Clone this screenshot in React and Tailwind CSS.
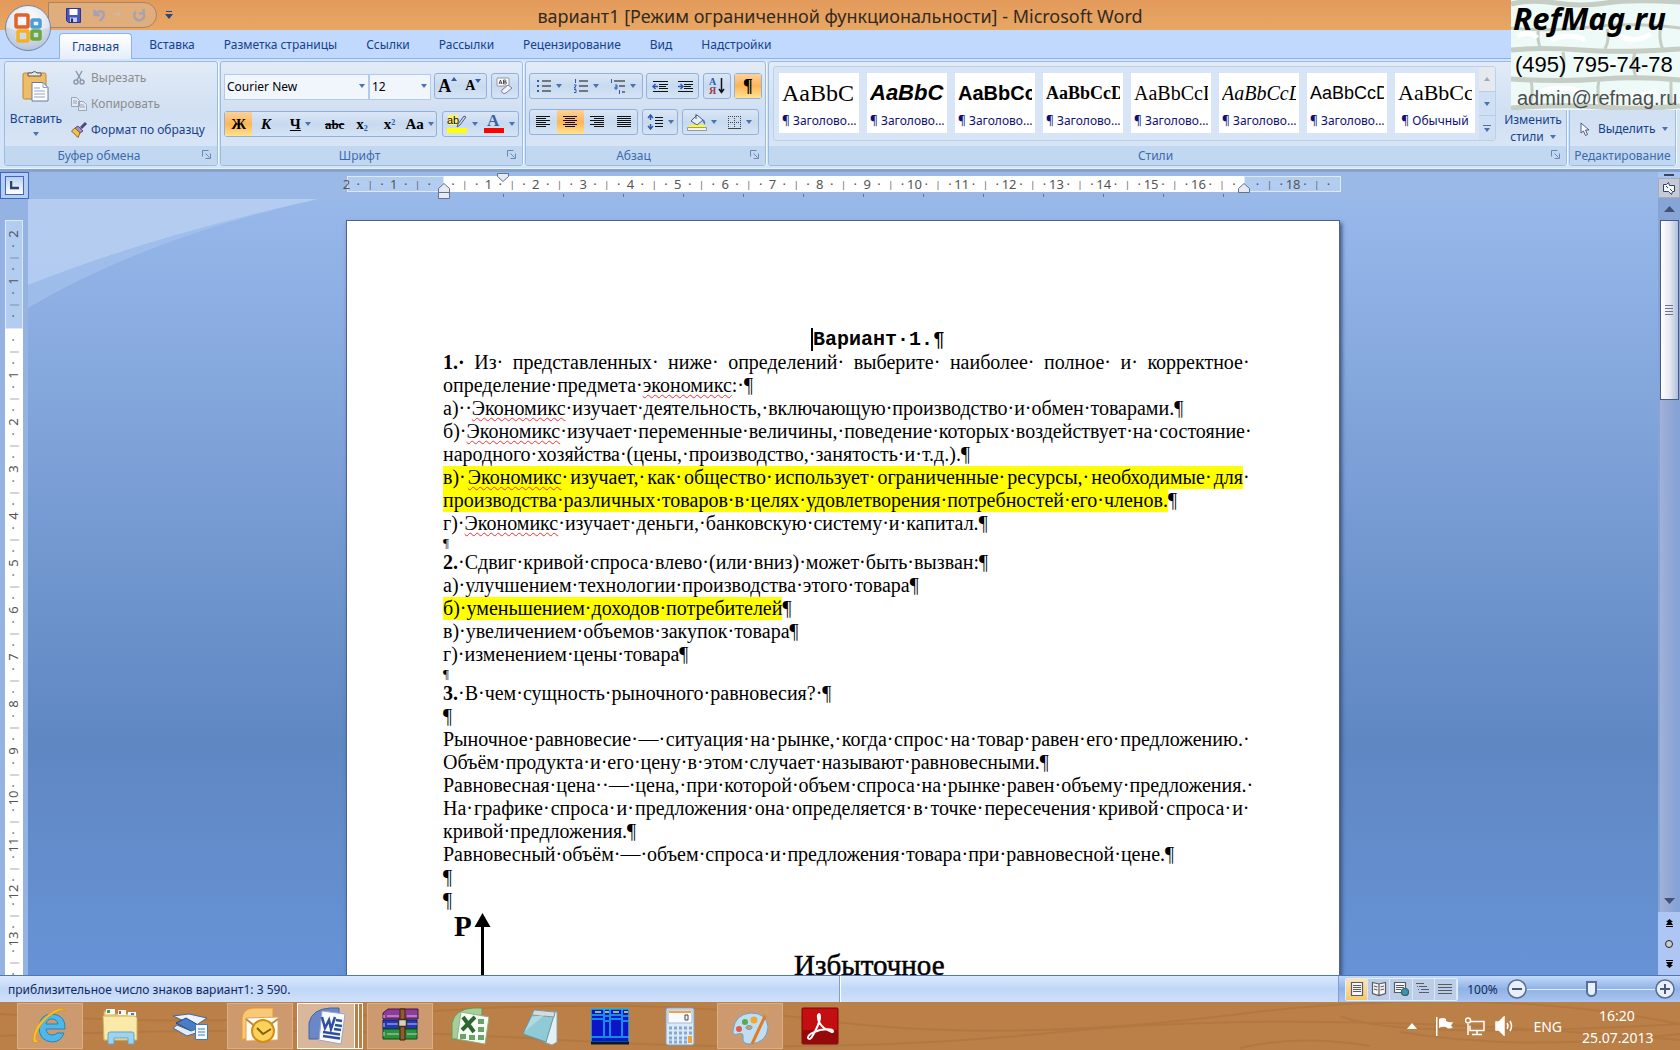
import clsx from "clsx";

const Caret = ({ className = "text-[#4a72b0]" }) => (
  <svg width="6" height="4" viewBox="0 0 6 4" className={clsx("shrink-0", className)}>
    <path d="M0 0h6L3 4z" fill="currentColor" />
  </svg>
);

const Launcher = () => (
  <button aria-label="Параметры" className="absolute right-1 bottom-1 flex h-3 w-3 items-center justify-center">
    <svg width="10" height="10" viewBox="0 0 10 10" fill="none" stroke="#6686b4">
      <path d="M.5 6.500v-6h6M3.500 3.500l4 4M8.500 3.500v5h-5" />
    </svg>
  </button>
);

function Group({ title, className, launcher = true, children }) {
  return (
    <section className={clsx("relative flex flex-col overflow-hidden rounded-[3px] border border-[#9bbce2] bg-linear-to-b from-[#e2ebf7] via-[#d0dff2] to-[#dce8f8] shadow-[1px_0_0_#f4f9ff]", className)}>
      <div className="flex flex-1">{children}</div>
      <h2
        className={clsx(
          "h-[19px] bg-[#c2d8f1] text-center font-['Noto_Sans',sans-serif] text-[12px] leading-5 whitespace-nowrap text-[#3e6aaa]",
          launcher && "pr-6"
        )}
      >
        {title}
      </h2>
      {launcher && <Launcher />}
    </section>
  );
}

const Box = ({ children, className }) => (
  <div className={clsx("flex h-[26px] rounded-[3px] border border-[#8fb1dc] bg-linear-to-b from-[#dbe6f5] via-[#c8daf0] to-[#d5e3f5]", className)}>
    {children}
  </div>
);

function Tool({ label, active, caret, className, children }) {
  return (
    <button
      aria-label={label}
      className={clsx(
        "flex flex-1 items-center justify-center gap-1 font-['Liberation_Serif',serif] text-[15px] leading-none font-bold text-black",
        active && "bg-linear-to-b from-[#fbd29b] via-[#fdb552] to-[#fee391]",
        className
      )}
    >
      {children}
      {caret && <Caret />}
    </button>
  );
}

const Lines = ({ rows }) => (
  <svg width="16" height="14" viewBox="0 0 16 14" stroke="#111">
    {rows.map(([a, b], i) => (
      <path key={i} d={`M${a} ${i * 2 + 1.5}H${b}`} />
    ))}
  </svg>
);

const aligns = [
  { label: "По левому краю", rows: [[1, 15], [1, 11], [1, 15], [1, 11], [1, 15], [1, 11]] },
  { label: "По центру", active: true, rows: [[1, 15], [3, 13], [1, 15], [3, 13], [1, 15], [3, 13]] },
  { label: "По правому краю", rows: [[1, 15], [5, 15], [1, 15], [5, 15], [1, 15], [5, 15]] },
  { label: "По ширине", rows: [[1, 15], [1, 15], [1, 15], [1, 15], [1, 15], [1, 15]] },
];

const tabs = ["Главная", "Вставка", "Разметка страницы", "Ссылки", "Рассылки", "Рецензирование", "Вид", "Надстройки"];

const styles = [
  { text: "AaBbC", name: "Заголово...", look: "font-['Liberation_Serif',serif] text-[24px]" },
  { text: "AaBbC", name: "Заголово...", look: "font-['Liberation_Sans',sans-serif] text-[22px] font-bold italic" },
  { text: "AaBbCc", name: "Заголово...", look: "font-['Liberation_Sans',sans-serif] text-[20px] font-bold" },
  { text: "AaBbCcD", name: "Заголово...", look: "font-['Liberation_Serif',serif] text-[18px] font-bold" },
  { text: "AaBbCcD", name: "Заголово...", look: "font-['Liberation_Serif',serif] text-[20px]" },
  { text: "AaBbCcD", name: "Заголово...", look: "font-['Liberation_Serif',serif] text-[20px] italic" },
  { text: "AaBbCcD", name: "Заголово...", look: "font-['Liberation_Sans',sans-serif] text-[18px]" },
  { text: "AaBbCc", name: "Обычный", look: "font-['Liberation_Serif',serif] text-[22px]" },
];

function OfficeButton() {
  return (
    <button aria-label="Office" className="absolute top-1 left-1 z-20 h-12 w-12">
      <svg width="48" height="48" viewBox="0 0 48 48">
        <defs>
          <radialGradient id="orb" cx=".5" cy=".3" r=".8">
            <stop offset="0" stopColor="#fff" />
            <stop offset=".6" stopColor="#dfe6f0" />
            <stop offset="1" stopColor="#9fb0ca" />
          </radialGradient>
        </defs>
        <circle cx="24" cy="24" r="22.500" fill="url(#orb)" stroke="#7186a8" />
        <path d="M2 23q22 9 44 0a22 22 0 0 1-44 0z" fill="#b9c7dd" opacity=".5" />
        <g fill="none" strokeWidth="3.500">
          <rect x="12" y="11" width="12" height="12" rx="1" stroke="#e2632a" />
          <rect x="28" y="16" width="8" height="7" rx="1" stroke="#4a9ddb" />
          <rect x="14" y="27" width="10" height="10" rx="1" stroke="#f3b226" />
          <rect x="28" y="27" width="8" height="8" rx="1" stroke="#69a83a" />
        </g>
      </svg>
    </button>
  );
}

function TitleBar() {
  return (
    <header className="relative flex h-[30px] items-center bg-linear-to-b from-[#e29a5b] to-[#e8a764]">
      <div className="absolute top-[2px] left-12 flex h-[26px] w-[109px] items-center gap-3 rounded-r-full border border-[#a98463] bg-[#e0ad7c] pl-[17px]">
        <button aria-label="Сохранить">
          <svg width="15" height="15" viewBox="0 0 15 15">
            <path d="M.5.5h14v14h-12l-2-2z" fill="#4a55c0" stroke="#2b3590" />
            <path d="M3.500 1h8v6h-8z" fill="#fff" />
            <path d="M4 9.500h7V14H4z" fill="#c8cde8" />
            <path d="M5 10.500h2V14H5z" fill="#222a70" />
          </svg>
        </button>
        <button aria-label="Отменить" className="flex items-center gap-2">
          <svg width="14" height="14" viewBox="0 0 14 14" fill="none" stroke="#a3a3b4" strokeWidth="2.500">
            <path d="M3 6C7 1 13 4 10 9l-3 4M1.500 1.500V7H7" />
          </svg>
          <Caret className="text-[#c9b9ae]" />
        </button>
        <button aria-label="Повторить">
          <svg width="13" height="13" viewBox="0 0 13 13" fill="none" stroke="#a3a3b4" strokeWidth="2.500">
            <path d="M3 2.500A5 5 0 1 0 10 3M6 4.500h4.500V0" />
          </svg>
        </button>
      </div>
      <button aria-label="Настройка панели" className="absolute top-[11px] left-[165px]">
        <svg width="8" height="8" viewBox="0 0 8 8" fill="#27467e">
          <path d="M1 0h6v1H1zM0 3h8L4 8z" />
        </svg>
      </button>
      <h1 className="flex-1 pt-[2px] text-center font-['Noto_Sans',sans-serif] text-[18px] text-[#33291f]">
        вариант1 [Режим ограниченной функциональности] - Microsoft Word
      </h1>
    </header>
  );
}

function Tabs() {
  return (
    <nav className="flex h-[29px] items-end gap-[5px] border-b border-[#8db2e3] bg-[#c0d9fd] pl-[59px]">
      {tabs.map((tab, i) => (
        <button
          key={tab}
          className={clsx(
            "h-[26px] px-3 font-['Noto_Sans',sans-serif] text-[12px] text-[#15428b]",
            i === 0 && "-mb-px rounded-t-[4px] border border-b-0 border-[#8db2e3] bg-linear-to-b from-white to-[#e6eefa]"
          )}
        >
          {tab}
        </button>
      ))}
    </nav>
  );
}

function Clipboard() {
  const item = "flex h-[26px] items-center gap-1 font-['Noto_Sans',sans-serif] text-[12px] whitespace-nowrap";
  return (
    <Group title="Буфер обмена" className="w-[214px]">
      <button className="flex w-[62px] flex-col items-center pt-2 font-['Noto_Sans',sans-serif] text-[12px] text-[#15428b]">
        <svg width="28" height="32" viewBox="0 0 28 32">
          <rect x="1" y="3" width="23" height="26" rx="1.500" fill="#efbd66" stroke="#b98730" />
          <path d="M6 6V3h4a3 3 0 0 1 5 0h4v3z" fill="#e8e8e8" stroke="#555" />
          <path d="M10 12.500h11l5 5V31H10z" fill="#fff" stroke="#667aa5" />
          <path d="M21 12.500v5h5M12 18h6M12 21h11M12 24h11M12 27h11" fill="none" stroke="#8ea3cc" />
        </svg>
        <span className="mt-2">Вставить</span>
        <Caret className="mt-1 text-[#4a72b0]" />
      </button>
      <div className="mt-[3px] pl-1">
        <button className={clsx(item, "text-[#8d8d8d]")} disabled>
          <svg width="16" height="16" viewBox="0 0 16 16" fill="none" stroke="#8c98ac" strokeWidth="1.500">
            <path d="M5 1l5 9M11 1L6 10" />
            <circle cx="5" cy="12" r="2" />
            <circle cx="11" cy="12" r="2" />
          </svg>
          Вырезать
        </button>
        <button className={clsx(item, "text-[#8d8d8d]")} disabled>
          <svg width="16" height="14" viewBox="0 0 16 14" fill="#e3e9f2" stroke="#98a4b8">
            <path d="M.5.5h5l3 3v6h-8zM7.500 4.500h5l3 3v6h-8zM2 4h4M2 6h4M9 8h4M9 10h5" />
          </svg>
          Копировать
        </button>
        <button className={clsx(item, "text-[#15428b]")}>
          <svg width="16" height="16" viewBox="0 0 16 16">
            <path d="M15 1l-5 5" stroke="#4d4680" strokeWidth="3" />
            <path d="M7 4l5 5-3 2-5-5z" fill="#a58fc0" stroke="#5a4a80" />
            <path d="M4 6l5 5-2 4.500L.5 9z" fill="#f2c14a" stroke="#8a6420" />
          </svg>
          Формат по образцу
        </button>
      </div>
    </Group>
  );
}

function Combo({ label, value, className }) {
  return (
    <label className={clsx("relative block", className)}>
      <select
        aria-label={label}
        className="h-[26px] w-full appearance-none border border-[#b3cbea] bg-[#f1f6fd] pl-[2px] font-['Noto_Sans',sans-serif] text-[12px] text-black"
      >
        <option>{value}</option>
      </select>
      <Caret className="absolute top-[11px] right-[4px] text-[#4a72b0]" />
    </label>
  );
}

function FontGroup() {
  return (
    <Group title="Шрифт" className="w-[303px]">
      <div className="flex w-full flex-col gap-[11px] px-[3px] pt-[11px]">
        <div className="flex">
          <Combo label="Шрифт" value="Courier New" className="w-[145px]" />
          <Combo label="Размер шрифта" value="12" className="w-[62px]" />
          <Box className="ml-[3px] w-[53px]">
            <Tool label="Увеличить размер">
              <span className="flex items-start text-[18px]">A<Caret className="rotate-180 text-[#2c5bb0]" /></span>
            </Tool>
            <Tool label="Уменьшить размер">
              <span className="flex items-start text-[14px]">A<Caret className="text-[#2c5bb0]" /></span>
            </Tool>
          </Box>
          <Box className="ml-auto w-[28px]">
            <Tool label="Очистить формат">
              <svg width="18" height="18" viewBox="0 0 18 18">
                <rect x="1" y="1" width="12" height="8" rx="1" fill="#fff" stroke="#8c93a5" />
                <path d="M3 7l1.500-4L6 7M3.500 6H6M7.500 3v4h2a1 1 0 0 0 0-2h-2h1.500a1 1 0 0 0 0-2z" fill="none" stroke="#333" strokeWidth=".8" />
                <path d="M6 13l6-5 4 3-6 5q-2 1-3.500 0T6 13z" fill="#f2f4f8" stroke="#777f92" />
              </svg>
            </Tool>
          </Box>
        </div>
        <div className="flex justify-between">
          <Box className="w-[213px]">
            <Tool label="Полужирный" active>Ж</Tool>
            <Tool label="Курсив"><i>К</i></Tool>
            <Tool label="Подчеркнутый" caret className="flex-[1.500]"><u>Ч</u></Tool>
            <Tool label="Зачеркнутый"><s className="text-[13px]">abc</s></Tool>
            <Tool label="Подстрочный"><span>x<sub className="text-[8px] text-[#2c5bb0]">2</sub></span></Tool>
            <Tool label="Надстрочный"><span>x<sup className="text-[8px] text-[#2c5bb0]">2</sup></span></Tool>
            <Tool label="Регистр" caret className="flex-[1.200]">Aa</Tool>
          </Box>
          <Box className="w-[77px]">
            <Tool label="Цвет выделения" caret>
              <svg width="22" height="20" viewBox="0 0 22 20" className="overflow-visible">
                <rect x="2" y="1" width="10" height="10" fill="#fff36b" />
                <text x="1" y="10" fontSize="11" fontFamily="Liberation Sans" fontWeight="normal" fill="#111">ab</text>
                <path d="M18 2l-6 8-1 3 3-2 6-8z" fill="#cfd8e8" stroke="#4b5b7e" />
                <path d="M1 14h20v5H1z" fill="#ff0" />
              </svg>
            </Tool>
            <Tool label="Цвет текста" caret>
              <svg width="22" height="20" viewBox="0 0 22 20" className="overflow-visible">
                <text x="4" y="12" fontSize="17" fontWeight="bold" fontFamily="Liberation Serif" fill="#3b5f9f">A</text>
                <path d="M1 14h20v5H1z" fill="#f00" />
              </svg>
            </Tool>
          </Box>
        </div>
      </div>
    </Group>
  );
}

function ParagraphGroup() {
  return (
    <Group title="Абзац" className="w-[241px]">
      <div className="flex w-full flex-col gap-[10px] px-[3px] pt-[11px]">
        <div className="flex justify-between">
          <Box className="w-[114px]">
            <Tool label="Маркеры" caret>
              <svg width="16" height="14" viewBox="0 0 16 14">
                <path d="M1 1h2v2H1zM1 6h2v2H1zM1 11h2v2H1z" fill="#2c5bb0" />
                <path d="M6 2h9M6 7h9M6 12h9" stroke="#111" />
              </svg>
            </Tool>
            <Tool label="Нумерация" caret>
              <svg width="16" height="14" viewBox="0 0 16 14">
                <path d="M2.500 0v4M1 6h2v1L1 9h2M1 10.500h2v3H1" stroke="#2c5bb0" fill="none" />
                <path d="M6 2h9M6 7h9M6 12h9" stroke="#111" />
              </svg>
            </Tool>
            <Tool label="Многоуровневый список" caret>
              <svg width="16" height="15" viewBox="0 0 16 15">
                <path d="M1.500 0v4M5 6h2v4H5V8h2M9.500 11v4" stroke="#2c5bb0" fill="none" />
                <path d="M4 2h11M9 7h6M12 13h3" stroke="#111" />
              </svg>
            </Tool>
          </Box>
          <Box className="w-[53px]">
            {[["Уменьшить отступ", "M6 7.500H1M3.500 5L1 7.500 3.500 10"], ["Увеличить отступ", "M1 7.500h5M3.500 5L6 7.500 3.500 10"]].map(([label, d]) => (
              <Tool key={label} label={label}>
                <svg width="17" height="15" viewBox="0 0 17 15" fill="none">
                  <path d="M1 2.500h15M7 5.500h9M7 7.500h7M7 9.500h9M1 12.500h15" stroke="#111" />
                  <path d={d} stroke="#2c5bb0" strokeWidth="1.500" />
                </svg>
              </Tool>
            ))}
          </Box>
          <Box className="w-[28px]">
            <Tool label="Сортировка">
              <svg width="16" height="18" viewBox="0 0 16 18" className="overflow-visible">
                <text x="0" y="8" fontSize="10" fontWeight="bold" fontFamily="Liberation Serif" fill="#2c5bb0">А</text>
                <text x="0" y="17" fontSize="10" fontWeight="bold" fontFamily="Liberation Serif" fill="#9c3d3d">Я</text>
                <path d="M12.500 1v14M10 12l2.500 3.500L15 12" fill="none" stroke="#111" strokeWidth="1.500" />
              </svg>
            </Tool>
          </Box>
          <Box className="w-[28px]">
            <Tool label="Отобразить все знаки" active className="text-[18px]">¶</Tool>
          </Box>
        </div>
        <div className="flex gap-[4px]">
          <Box className="w-[109px]">
            {aligns.map((a) => (
              <Tool key={a.label} label={a.label} active={a.active}>
                <Lines rows={a.rows} />
              </Tool>
            ))}
          </Box>
          <Box className="w-[36px]">
            <Tool label="Междустрочный интервал" caret>
              <svg width="17" height="16" viewBox="0 0 17 16" fill="none">
                <path d="M3.500 1v5M1 4l2.500-3L6 4M3.500 10v5M1 12l2.500 3L6 12" stroke="#2c5bb0" strokeWidth="1.500" />
                <path d="M8 3.500h8M8 6.500h8M8 9.500h8M8 12.500h8" stroke="#111" />
              </svg>
            </Tool>
          </Box>
          <Box className="w-[77px]">
            <Tool label="Заливка" caret>
              <svg width="20" height="18" viewBox="0 0 20 18">
                <path d="M4 8l6-6 6 5-6 5z" fill="#e6edf7" stroke="#4b5b7e" />
                <path d="M9 6V1" stroke="#4b5b7e" />
                <path d="M15 6q4 1 3 6-2-2-3-6z" fill="#4a78c4" />
                <path d="M2 12h16v2H2z" fill="#ff0" />
                <path d="M.5 14.500h19v3H.5z" fill="#f2f2f2" stroke="#999" />
              </svg>
            </Tool>
            <Tool label="Границы" caret>
              <svg width="15" height="15" viewBox="0 0 15 15" stroke="#444" fill="none">
                <path d="M1.500 1v12M7.500 1v12M13.500 1v12M1 1.500h13M1 7.500h13" strokeDasharray="1 1" />
                <path d="M1 13.500h13" />
              </svg>
            </Tool>
          </Box>
        </div>
      </div>
    </Group>
  );
}

function StylesGroup() {
  return (
    <Group title="Стили" className="min-w-0 flex-1">
      <div className="mx-1 mt-1 flex h-[75px] min-w-0 flex-1 overflow-hidden rounded-[3px] border border-[#bdd0ea] bg-[#d8e5f6]">
        <div className="flex min-w-0 flex-1 gap-2 overflow-hidden pt-[6px] pl-[5px]">
          {styles.map((s, i) => (
            <button key={i} className="flex h-[60px] w-20 shrink-0 flex-col bg-white px-[3px] pt-1 text-black">
              <span className={clsx("block h-8 w-full overflow-hidden text-left leading-8 whitespace-nowrap", s.look)}>{s.text}</span>
              <span className="w-full text-center font-['Noto_Sans',sans-serif] text-[12px] leading-6 whitespace-nowrap text-[#100f72]">
                ¶ {s.name}
              </span>
            </button>
          ))}
        </div>
        <div className="flex w-4 flex-col bg-[#cfdff4]">
          <button aria-label="Вверх" className="flex flex-1 items-center justify-center border-b border-[#b7cce9] bg-[#e6e9ee]">
            <Caret className="rotate-180 text-[#a0a9b8]" />
          </button>
          <button aria-label="Вниз" className="flex flex-1 items-center justify-center border-b border-[#b7cce9]">
            <Caret />
          </button>
          <button aria-label="Дополнительно" className="flex flex-1 flex-col items-center justify-center gap-[2px]">
            <span className="h-px w-2 bg-[#4a72b0]" />
            <Caret />
          </button>
        </div>
      </div>
      <button className="flex w-[66px] flex-col items-center justify-end pb-px font-['Noto_Sans',sans-serif] text-[12px] leading-[17px] text-[#15428b]">
        Изменить
        <span className="flex items-center gap-[6px]">стили <Caret /></span>
      </button>
    </Group>
  );
}

function EditingGroup() {
  return (
    <Group title="Редактирование" className="w-[107px]" launcher={false}>
      <button className="mt-auto mb-1 ml-[10px] flex h-[26px] items-center gap-[7px] font-['Noto_Sans',sans-serif] text-[12px] text-[#15428b]">
        <svg width="11" height="15" viewBox="0 0 11 15">
          <path d="M1 1v10l2.500-2 2 4.500 2-1L5.500 8H9z" fill="#fff" stroke="#4c5a78" />
        </svg>
        Выделить
        <Caret />
      </button>
    </Group>
  );
}

function Watermark() {
  return (
    <aside className="absolute top-0 right-0 z-30 h-[110px] w-[169px] overflow-hidden bg-[#eefaf7] whitespace-nowrap">
      <svg width="169" height="110" viewBox="0 0 169 110" className="absolute inset-0">
        <g fill="none" stroke="#c5cdc4">
          <path d="M0 4q20-5 45-1t50 0 74-1" strokeWidth="5" />
          <path d="M0 28q40 4 80-1t89 1" strokeWidth="3" />
          <path d="M0 50q30-3 70 0t99-1M0 79q50 3 90 0t79 1M0 108q50-4 90-1t79-1" strokeWidth="5" />
          <path d="M28 28q-3 10 2 22M96 29q3 10-2 20M150 26q-3 12 2 24M52 52q3 12-2 26M124 52q-4 12 1 26M20 80q3 14-2 28M88 80q-3 12 2 28M160 80v26" strokeWidth="3" />
        </g>
        <path d="M6 36q14-6 20 2M40 40q20-8 34 0M108 36q16 8 32-2M8 64l24-5M66 62q24 8 40 0M30 92q20-8 40 0M100 94q20 6 46-3" fill="none" stroke="#fff" strokeWidth="5" />
      </svg>
      <div className="relative flex flex-col pl-[2px]">
        <strong className="h-11 font-['Noto_Sans',sans-serif] text-[31px] leading-9 font-bold text-black italic">RefMag.ru</strong>
        <span className="h-10 pl-[2px] font-['Liberation_Sans',sans-serif] text-[22px] leading-[42px] text-black">(495) 795-74-78</span>
        <span className="pl-[4px] font-['Liberation_Sans',sans-serif] text-[20px] leading-7 text-[#4d4d4d]">admin@refmag.ru</span>
      </div>
    </aside>
  );
}

function RulerCell({ n, vertical }) {
  return (
    <div className={clsx("flex shrink-0", vertical ? "h-[47px] flex-col" : "flex-1")}>
      {[n, "·", "|", "·"].map((mark, i) => (
        <div key={i} className="flex-1">
          <span
            className={clsx(
              "flex items-center justify-center font-['Noto_Sans',sans-serif] text-[#555]",
              vertical ? "h-0 -rotate-90" : "h-[18px] w-0",
              mark === "|" ? "text-[9px]" : "text-[13px]"
            )}
          >
            {mark}
          </span>
        </div>
      ))}
    </div>
  );
}

const hMarks = [2, 1, "", 1, 2, 3, 4, 5, 6, 7, 8, 9, 10, 11, 12, 13, 14, 15, 16, "", 18];
const vMarks = [2, 1, "", 1, 2, 3, 4, 5, 6, 7, 8, 9, 10, 11, 12, 13];

function Ruler() {
  return (
    <div className="flex h-[27px] shrink-0 bg-[#9bb9e6]">
      <button aria-label="Табуляция" className="flex w-[29px] items-center justify-center border border-[#3c68be] bg-[#b5cdf2]">
        <span className="flex h-[19px] w-[19px] items-center justify-center border border-[#3c68be] bg-linear-to-b from-[#b9cff0] to-white">
          <svg width="9" height="9" viewBox="0 0 9 9"><path d="M1 0v7h8" fill="none" stroke="#2d4266" strokeWidth="2.500" /></svg>
        </span>
      </button>
      <div className="min-w-0 flex-1">
        <div className="relative mx-auto mt-1 flex h-4 w-[994px]">
          <div className="w-[97px] border border-[#dce9fb] bg-[#b3cdf1]" />
          <div className="w-[800px] bg-white" />
          <div className="flex-1 border border-[#dce9fb] bg-[#b3cdf1]" />
          <div className="absolute inset-0 flex">
            {hMarks.map((n, i) => <RulerCell key={i} n={n} />)}
          </div>
          {/* default tab stops */}
          <div className="absolute top-[18px] left-[97px] h-[3px] w-[800px] bg-[repeating-linear-gradient(90deg,transparent_0_59px,#6d7484_59px_60px)]" />
          <svg width="12" height="9" viewBox="0 0 12 9" className="absolute -top-[3px] left-[150px]">
            <path d="M.5.5h11v3l-5.500 5-5.500-5z" fill="#e6eaf2" stroke="#66718a" />
          </svg>
          <svg width="12" height="16" viewBox="0 0 12 16" className="absolute top-[7px] left-[91px]">
            <path d="M.5 9.500v-4L6 .5l5.500 5v10H.5zM.5 9.500h11" fill="#e6eaf2" stroke="#66718a" />
          </svg>
          <svg width="12" height="10" viewBox="0 0 12 10" className="absolute top-[7px] left-[891px]">
            <path d="M.5 9.500v-4L6 .5l5.500 5v4z" fill="#e6eaf2" stroke="#66718a" />
          </svg>
        </div>
      </div>
    </div>
  );
}

const Bad = ({ children }) => (
  <span className="underline decoration-red-500 decoration-wavy decoration-1 underline-offset-2">{children}</span>
);

// a line stretched to both margins, the trailing space mark hangs outside
function Full({ text, bad, bold, marked }) {
  const words = text.split(" ");
  return (
    <p className={clsx("flex justify-between", marked && "bg-[#ff0]")}>
      {words.map((w, i) => (
        <span key={i} className={clsx("relative", i === 0 && bold && "font-bold")}>
          {w === bad ? <Bad>{w}</Bad> : w}
          {i < words.length - 1 ? "·" : <span className="absolute left-full bg-white">·</span>}
        </span>
      ))}
    </p>
  );
}

function Line({ children, marked }) {
  return (
    <p>
      {marked ? <mark className="inline-block bg-[#ff0] text-black">{children}</mark> : children}¶
    </p>
  );
}

const Small = () => <p className="text-[13px] leading-4">¶</p>;

function Page() {
  return (
    <article className="relative mx-auto mt-[21px] w-[994px] border border-[#55618a] bg-white px-[96px] pt-[107px] pb-20 font-['Liberation_Serif',serif] text-[20px] leading-[23px] whitespace-nowrap text-black shadow-[2px_3px_4px_#3a5582]">
      <h2 className="pl-[58px] text-center font-['Liberation_Mono',monospace] font-bold">
        <span className="relative border-l-2 border-black">
          Вариант·1.<span className="absolute left-full font-normal">¶</span>
        </span>
      </h2>
      <Full text="1. Из представленных ниже определений выберите наиболее полное и корректное" bold />
      <Line>определение·предмета·<Bad>экономикс</Bad>:·</Line>
      <Line>а)··<Bad>Экономикс</Bad>·изучает·деятельность,·включающую·производство·и·обмен·товарами.</Line>
      <Full text="б) Экономикс изучает переменные величины, поведение которых воздействует на состояние" bad="Экономикс" />
      <Line>народного·хозяйства·(цены,·производство,·занятость·и·т.д.).</Line>
      <Full text="в) Экономикс изучает, как общество использует ограниченные ресурсы, необходимые для" bad="Экономикс" marked />
      <Line marked>производства·различных·товаров·в·целях·удовлетворения·потребностей·его·членов.</Line>
      <Line>г)·<Bad>Экономикс</Bad>·изучает·деньги,·банковскую·систему·и·капитал.</Line>
      <Small />
      <Line><b>2.</b>·Сдвиг·кривой·спроса·влево·(или·вниз)·может·быть·вызван:</Line>
      <Line>а)·улучшением·технологии·производства·этого·товара</Line>
      <Line marked>б)·уменьшением·доходов·потребителей</Line>
      <Line>в)·увеличением·объемов·закупок·товара</Line>
      <Line>г)·изменением·цены·товара</Line>
      <Small />
      <Line><b>3.</b>·В·чем·сущность·рыночного·равновесия?·</Line>
      <Line />
      <Full text="Рыночное равновесие — ситуация на рынке, когда спрос на товар равен его предложению." />
      <Line>Объём·продукта·и·его·цену·в·этом·случает·называют·равновесными.</Line>
      <Full text="Равновесная цена· — цена, при которой объем спроса на рынке равен объему предложения." />
      <Full text="На графике спроса и предложения она определяется в точке пересечения кривой спроса и" />
      <Line>кривой·предложения.</Line>
      <Line>Равновесный·объём·—·объем·спроса·и·предложения·товара·при·равновесной·цене.</Line>
      <Line />
      <Line />
      <svg width="560" height="120" viewBox="0 0 560 120" fontFamily="Liberation Serif">
        <text x="11" y="24" fontSize="29" fontWeight="bold">P</text>
        <path d="M39.500 1l8 14h-16z" />
        <path d="M39.500 12v108" stroke="#000" strokeWidth="3" />
        <text x="351" y="63" fontSize="29" stroke="#000" strokeWidth=".5">Избыточное</text>
      </svg>
    </article>
  );
}

function ScrollBar() {
  return (
    <div className="flex w-[22px] shrink-0 flex-col items-center bg-[#86a5d6]">
      <div className="flex h-[6px] w-full items-center justify-center bg-[#a9c4ee]">
        <span className="h-[2px] w-[10px] bg-[#3d4560]" />
      </div>
      <button aria-label="Линейка" className="flex h-5 w-full items-center justify-center border border-[#a8aab8] bg-[#c3cbd9]">
        <svg width="14" height="13" viewBox="0 0 14 13" fill="#f4f8fc" stroke="#31425f">
          <path d="M1.500 2.500h3l2-2 1 3h5v6h-2l-1 3-3-3h-5z" />
          <path d="M4 4l2 2M8 7l2 2" />
        </svg>
      </button>
      <button aria-label="Прокрутить вверх" className="flex h-[22px] w-full items-center justify-center">
        <svg width="11" height="6" viewBox="0 0 11 6"><path d="M5.500 0L11 6H0z" fill="#454f73" /></svg>
      </button>
      <div className="flex h-[180px] w-[19px] flex-col items-center justify-center gap-[2px] border border-[#4a5a86] bg-linear-to-r from-white via-[#e6e9f0] to-[#aebfdd]">
        {[0, 1, 2, 3].map((i) => <span key={i} className="h-px w-2 bg-[#6c7590]" />)}
      </div>
      <div className="flex w-[19px] flex-1 flex-col items-center justify-end bg-linear-to-r from-[#a2b1d6] to-[#84a0d6] pb-2">
        <svg width="11" height="6" viewBox="0 0 11 6"><path d="M0 0h11L5.500 6z" fill="#454f73" /></svg>
      </div>
      <div className="flex h-[63px] w-full flex-col items-center justify-between bg-[#aec6f3] py-[7px]">
        <button aria-label="Предыдущая страница">
          <svg width="7" height="8" viewBox="0 0 7 8"><path d="M3.500 0L7 3H5l2 3H0l2-3H0zM0 7h7v1H0z" /></svg>
        </button>
        <button aria-label="Выбор объекта">
          <svg width="8" height="8" viewBox="0 0 8 8"><circle cx="4" cy="4" r="3.500" fill="#ccc" stroke="#222" /></svg>
        </button>
        <button aria-label="Следующая страница">
          <svg width="7" height="8" viewBox="0 0 7 8"><path d="M3.500 8L7 5H5l2-3H0l2 3H0zM0 0h7v1H0z" /></svg>
        </button>
      </div>
    </div>
  );
}

function Workspace() {
  return (
    <main className="flex min-h-0 flex-1">
      <div className="flex min-w-0 flex-1 flex-col">
        <Ruler />
        <div className="flex min-h-0 flex-1">
          <div className="w-7 shrink-0 overflow-hidden bg-[#94b3e3] pt-[21px] pl-[5px]">
            <div className="relative w-[18px]">
              <div className="h-[109px] border border-[#dce9fb] bg-[#b3cdf1]" />
              <div className="h-[700px] bg-white" />
              <div className="absolute inset-x-0 top-[14px]">
                {vMarks.map((n, i) => <RulerCell key={i} n={n} vertical />)}
              </div>
            </div>
          </div>
          <div className="relative min-w-0 flex-1 overflow-hidden bg-linear-to-b from-[#98b8ea] via-[#5f87c2] via-70% to-[#6793d6]">
            <svg width="290" height="110" viewBox="0 0 290 110" className="absolute top-0 left-0">
              <path d="M0 0h290Q120 38 0 109z" fill="#a9c4ee" opacity=".6" />
              <path d="M0 0h290Q120 38 0 86z" fill="#b9d0f2" opacity=".75" />
            </svg>
            <Page />
          </div>
        </div>
      </div>
      <ScrollBar />
    </main>
  );
}

const views = [
  ["Разметка страницы", "M2.500 1.500h11v13h-11zM4 4.500h8M4 6.500h8M4 8.500h8M4 10.500h8"],
  ["Режим чтения", "M8 3v12M1.500 1.500L8 3l6.500-1.500v11L8 14.500l-6.500-2zM3 5l3.500 1M3 8l3.500 1M13 5L9.500 6M13 8L9.500 9"],
  ["Веб-документ", "M1.500 1.500h11v10h-11zM3 4.500h8M3 6.500h8M3 8.500h5"],
  ["Структура", "M1 2.500h8M4 5.500h8M6 8.500h8M4 11.500h10M2 5.500h1M3 8.500h1"],
  ["Черновик", "M1 3.500h14M1 6.500h14M1 9.500h14M1 12.500h14"],
];

const ZoomButton = ({ label, d }) => (
  <button aria-label={label} className="shrink-0">
    <svg width="20" height="20" viewBox="0 0 20 20" fill="none">
      <circle cx="10" cy="10" r="9" fill="#e9f0fa" stroke="#5b6d92" strokeWidth="1.500" />
      <path d={d} stroke="#46587c" strokeWidth="2" />
    </svg>
  </button>
);

function StatusBar() {
  return (
    <footer className="flex h-[27px] shrink-0 border-t border-[#4f77b8] bg-linear-to-b from-[#dbe8fb] via-[#c0d7f8] to-[#cfe0fa] font-['Noto_Sans',sans-serif] text-[12px] text-[#15285c]">
      <div className="flex w-1/2 items-center border-r border-[#7e9fd0] pt-[2px] pl-2">приблизительное число знаков вариант1: 3 590.</div>
      <div className="flex-1 border-l border-white" />
      <div className="flex w-[342px] items-center border-l border-[#7e9fd0] bg-linear-to-b from-[#c3d9fa] via-[#8fb2e6] to-[#abc6f0] pl-[6px]">
        <div className="flex h-[23px] w-[113px] overflow-hidden rounded-[2px] border border-[#e2edfc] bg-[#bccde8]">
          {views.map(([label, d], i) => (
            <button
              key={label}
              aria-label={label}
              className={clsx("flex flex-1 items-center justify-center border-r border-[#dbe6f7]", i === 0 && "bg-linear-to-b from-[#fde3b5] to-[#f9c867]")}
            >
              <svg width="16" height="16" viewBox="0 0 16 16" fill={i < 3 ? "#f6f6f6" : "none"} stroke="#5a5a62" strokeWidth="1.200">
                <path d={d} />
                {i === 2 && <circle cx="12" cy="11" r="3.500" fill="#3c8fc0" stroke="#2c6a4a" />}
              </svg>
            </button>
          ))}
        </div>
        <button className="w-[49px] pt-px text-center">100%</button>
        <ZoomButton label="Уменьшить" d="M5 10h10" />
        <input
          type="range"
          aria-label="Масштаб"
          defaultValue="50"
          className="h-4 min-w-0 flex-1 appearance-none bg-[linear-gradient(#e6effc,#e6effc)] bg-[length:100%_1px] bg-center bg-no-repeat [&::-webkit-slider-thumb]:h-4 [&::-webkit-slider-thumb]:w-[11px] [&::-webkit-slider-thumb]:appearance-none [&::-webkit-slider-thumb]:rounded-b-full [&::-webkit-slider-thumb]:border-2 [&::-webkit-slider-thumb]:border-[#56709c] [&::-webkit-slider-thumb]:bg-[#e9f0fa]"
        />
        <ZoomButton label="Увеличить" d="M5 10h10M10 5v10" />
        <span className="w-[5px] shrink-0" />
      </div>
    </footer>
  );
}

const apps = [
  {
    name: "Internet Explorer",
    open: true,
    art: (
      <>
        <path fillRule="evenodd" d="M34 23H15q1 6 6 6 4 0 5-2h7q-3 9-12 9Q8 35 8 21 9 8 21 8q14 1 13 15zM15 18h12q-1-5-6-5t-6 5z" fill="#4db8ec" stroke="#2385bd" />
        <path d="M35 5Q30-1 18 8 2 20 2 33q0 6 7 2-5 1-4-5Q9 16 22 8q10-6 13-3z" fill="#f8c32c" stroke="#d29514" strokeWidth=".7" />
      </>
    ),
  },
  {
    name: "Проводник",
    art: (
      <>
        <path d="M3 5h8l2 3h22v26H3z" fill="#f0d68a" stroke="#c9a653" />
        <path d="M5 3h9v5H5zM17 4h8v5h-8zM27 6h8v5h-8z" fill="#f8f8f4" />
        <path d="M6 4h3v3H6z" fill="#3ba35b" /><path d="M18 5h2v3h-2z" fill="#d34b3b" /><path d="M30 7h3v2h-3z" fill="#3b7fd3" />
        <path d="M2 10h32l2 2v22H3z" fill="#fae9a8" stroke="#d0b05c" />
        <path d="M7 38V28q0-2 2-2h22q2 0 2 2v10h-6v-6H13v6z" fill="#9ed3ee" stroke="#5fa5cd" />
      </>
    ),
  },
  {
    name: "Сканер",
    art: (
      <>
        <path d="M2 10l16-2 18 4-12 8z" fill="#eef4fc" stroke="#45659a" />
        <path d="M5 17l10-5 14 8-7 6z" fill="#4b7cc4" stroke="#26467f" />
        <path d="M2 22l14 8 12-4v-4l-8 3-14-6z" fill="#e2eaf6" stroke="#45659a" />
        <path d="M24.500 18.500h12v15h-12zM27 23h7M27 26h7M27 29h7" fill="#f6faff" stroke="#3b78c2" />
      </>
    ),
  },
  {
    name: "Outlook",
    open: true,
    art: (
      <>
        <path d="M1 34V12Q2 3 12 2h20v20z" fill="#fbc87a" stroke="#e49a2c" />
        <path d="M5 35V12l32-1v23z" fill="#fffdf5" stroke="#dfa24a" />
        <path d="M5 13l15 12 17-12" fill="none" stroke="#b98a4a" strokeWidth="2" />
        <circle cx="22" cy="25" r="11" fill="#fbd25a" stroke="#d38e18" strokeWidth="2" />
        <path d="M16 22l6 6 8-5" fill="none" stroke="#8b5e12" strokeWidth="2" />
      </>
    ),
  },
  {
    name: "Word",
    open: true,
    stacked: true,
    art: (
      <>
        <path d="M1 33V17Q4 3 22 2h9v6L10 33z" fill="#6a87c8" stroke="#4562a6" />
        <path d="M14 5l23 3-4 30-22-4z" fill="#f8fafe" stroke="#98a8ca" />
        <path d="M14 11l3 11 4-8 2 9 4-12" fill="none" stroke="#2f4f9c" strokeWidth="2.500" />
        <path d="M28 14l6 1M27 19l7 1M26 23l7 1M15 26l17 2.500M15 30l17 2.500" stroke="#2f4f9c" strokeWidth="2.500" />
      </>
    ),
  },
  {
    name: "WinRAR",
    open: true,
    art: (
      <>
        <path d="M2 7l5-4h30v10H2z" fill="#8e3b9a" stroke="#3c1744" />
        <path d="M2 14h34v9H2z" fill="#2438b4" stroke="#101c60" />
        <path d="M2 23h34v10H2z" fill="#2a9438" stroke="#0e4a18" />
        <path d="M3 9v3M3 17v4M3 26v4M6 10h12M26 10h10M6 18h12M26 18h10M6 28h12M26 28h10" stroke="#cfc4e4" />
        <path d="M19 3h5v31h-5z" fill="#8f5a2c" stroke="#3d230c" />
        <path d="M17.500 13.500h8v7h-8z" fill="#d8d0c0" stroke="#3d3020" strokeWidth="1.500" />
      </>
    ),
  },
  {
    name: "Excel",
    art: (
      <>
        <path d="M1 33V17Q4 3 22 2h9v6L10 33z" fill="#a8cc9c" stroke="#5f9a58" />
        <path d="M10 6l28 5-4 27-28-5z" fill="#f8fcf6" stroke="#8ab582" />
        <path d="M12 11l11 15M24 11L11 24" stroke="#2c6630" strokeWidth="4" />
        <path d="M27 13h6v5h-6zM27 21h6v5h-6zM9 28h6v5H9zM18 29h6v5h-6zM27 29h6v5h-6z" fill="#6aa368" />
      </>
    ),
  },
  {
    name: "Блокнот",
    art: (
      <>
        <path d="M30 5l6 1v30l-5 3-8-3z" fill="#e6f0f2" stroke="#8ea4aa" />
        <path d="M13 4l21 2-9 30-23-8z" fill="#8fcad6" stroke="#5c98a8" />
        <path d="M13 4l21 2-1 5-22-2z" fill="#d3dde0" stroke="#86979c" />
        <path d="M3 26l8-15 14-3z" fill="#c4e4ea" opacity=".6" />
      </>
    ),
  },
  {
    name: "Библиотека",
    art: (
      <>
        <path d="M0 3h38v33H0z" fill="#0a14c8" stroke="#12b8e8" strokeWidth="1.500" />
        <path d="M13 3v27M19 3v27M31 3v27M0 31h38M1 9h11M1 13h11M20 9h10M20 13h10M14 10h4M14 15h4M32 10h6M32 15h6" stroke="#18b4f0" strokeWidth="1.500" />
        <path d="M4 6h6M22 6h6M14 6h4M33 6h4" stroke="#e8e84a" strokeWidth="1.500" />
        <path d="M0 37h38" stroke="#041c28" strokeWidth="3" />
      </>
    ),
  },
  {
    name: "Калькулятор",
    art: (
      <>
        <rect x="5" y="2" width="28" height="37" rx="2" fill="#dce9f6" stroke="#7f9dc2" />
        <path d="M7 4h24v13H7z" fill="#f8fbfe" stroke="#a5b9d2" />
        <path d="M8 6h22" stroke="#f3a23c" strokeWidth="2" />
        <path d="M24 9h3v5h-3z" fill="none" stroke="#445" />
        <path d="M8 22h23M8 27h23M8 32h23M8 36h18" stroke="#86a7cf" strokeWidth="3" strokeDasharray="3 2" />
        <path d="M27 30h4v7h-4z" fill="#f3a23c" />
      </>
    ),
  },
  {
    name: "Paint",
    open: true,
    art: (
      <>
        <path d="M2 24Q4 8 20 7q16 0 17 14-1 16-18 17-8 0-7-6t-5-4-5-4zm13-3a3 2 0 1 0 6 1 3 2 0 1 0-6-1z" fill="#c0def0" stroke="#6f9fc4" />
        <circle cx="8" cy="23" r="3" fill="#e35a4a" /><circle cx="14" cy="16" r="3" fill="#58ad4a" /><circle cx="23" cy="14" r="3.500" fill="#f0a832" />
        <path d="M35 8L21 38" stroke="#e07a28" strokeWidth="3" />
        <path d="M34 11l-1-7 4-3 1 6z" fill="#c7a268" />
      </>
    ),
  },
  {
    name: "Adobe Reader",
    art: (
      <>
        <rect x="1" y="2" width="36" height="36" rx="1" fill="#c30f12" stroke="#7d0406" />
        <path d="M1 24h36v14H1z" fill="#96090b" />
        <path d="M7 32q-1-4 12-8 12-2 13 1t-9-3q-7-6-6-13 2-3 2 3-1 7-7 17-3 6-5 3z" fill="none" stroke="#fff" strokeWidth="2" />
      </>
    ),
  },
];

function Taskbar() {
  return (
    <footer className="relative flex h-12 shrink-0 items-center bg-[#bb8047] pl-[17px] font-['Noto_Sans',sans-serif] text-white">
      <svg className="absolute inset-0 h-full w-full" viewBox="0 0 1680 48" preserveAspectRatio="none" fill="none" stroke="#a96f3a" strokeWidth="2" opacity=".45">
        <path d="M0 12q200 14 420-2t400 8 420-6 440 10M0 34q300-12 560 4t500-8 620 8M1240 46q60-14 130-2M1340 14q60 24 340 8M1400 30q120 20 280 2" />
      </svg>
      <div className="relative flex gap-1">
        {apps.map((app) => (
          <button
            key={app.name}
            aria-label={app.name}
            className={clsx(
              "flex h-[46px] w-[66px] items-center border",
              app.stacked
                ? "justify-start border-white bg-[#d9b79a] pl-[10px] shadow-[inset_-3px_0_0_#bb8047,inset_-4px_0_0_#fff,inset_-7px_0_0_#bb8047,inset_-8px_0_0_#fff]"
                : app.open ? "justify-center border-[#dcae84] bg-[#cd9a70]" : "justify-center border-transparent"
            )}
          >
            <svg width="38" height="40" viewBox="0 0 38 40">{app.art}</svg>
          </button>
        ))}
      </div>
      <div className="relative ml-auto flex items-center pr-7">
        <button aria-label="Скрытые значки" className="mr-[18px]">
          <svg width="10" height="6" viewBox="0 0 10 6"><path d="M5 0l5 6H0z" fill="#fff" /></svg>
        </button>
        <button aria-label="Центр поддержки" className="mr-[11px]">
          <svg width="19" height="20" viewBox="0 0 19 20">
            <path d="M1 1h1.500v19H1z" fill="#fff" />
            <path d="M4 3q4-2 7 0v2q3 2 7 1l-2 4 2 1q-4 3-7 0-4-1-7 1z" fill="#fff" />
          </svg>
        </button>
        <button aria-label="Сеть" className="mr-[10px]">
          <svg width="20" height="19" viewBox="0 0 20 19" fill="none" stroke="#fff" strokeWidth="1.500">
            <path d="M6 4.500h13v9H5v-5M12 14v3M7 17.500h10M3 7v11" />
            <circle cx="3" cy="3.500" r="2.500" />
          </svg>
        </button>
        <button aria-label="Громкость" className="mr-[18px]">
          <svg width="20" height="20" viewBox="0 0 20 20" fill="none" stroke="#fff" strokeWidth="1.500">
            <path d="M1 6h3l5-5v18l-5-5H1z" fill="#fff" />
            <path d="M12 7q2 3 0 6M15 5q3 5 0 10" />
          </svg>
        </button>
        <button className="mr-5 text-[14px]">ENG</button>
        <div className="w-[70px] pt-[2px] text-center text-[14px] leading-[22px]">
          <div>16:20</div>
          <div>25.07.2013</div>
        </div>
      </div>
    </footer>
  );
}

export default function App() {
  return (
    <div className="relative flex h-screen flex-col overflow-hidden bg-[#94b3e3]">
      <OfficeButton />
      <TitleBar />
      <Tabs />
      <div className="flex h-[110px] shrink-0 gap-[2px] border-b border-[#e9f4ff] bg-[#d3e3f8] px-1 pt-[2px] pb-[2px]">
        <Clipboard />
        <FontGroup />
        <ParagraphGroup />
        <StylesGroup />
        <EditingGroup />
      </div>
      <div className="h-[3px] shrink-0 bg-[#86a3d0]" />
      <Watermark />
      <Workspace />
      <StatusBar />
      <Taskbar />
    </div>
  );
}
